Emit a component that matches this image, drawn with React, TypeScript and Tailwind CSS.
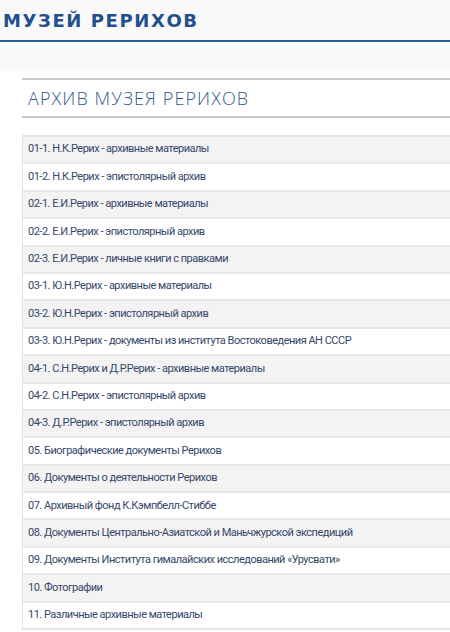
import React from "react";

const items = [
  "01-1. Н.К.Рерих - архивные материалы",
  "01-2. Н.К.Рерих - эпистолярный архив",
  "02-1. Е.И.Рерих - архивные материалы",
  "02-2. Е.И.Рерих - эпистолярный архив",
  "02-3. Е.И.Рерих - личные книги с правками",
  "03-1. Ю.Н.Рерих - архивные материалы",
  "03-2. Ю.Н.Рерих - эпистолярный архив",
  "03-3. Ю.Н.Рерих - документы из института Востоковедения АН СССР",
  "04-1. С.Н.Рерих и Д.Р.Рерих - архивные материалы",
  "04-2. С.Н.Рерих - эпистолярный архив",
  "04-3. Д.Р.Рерих - эпистолярный архив",
  "05. Биографические документы Рерихов",
  "06. Документы о деятельности Рерихов",
  "07. Архивный фонд К.Кэмпбелл-Стиббе",
  "08. Документы Центрально-Азиатской и Маньчжурской экспедиций",
  "09. Документы Института гималайских исследований «Урусвати»",
  "10. Фотографии",
  "11. Различные архивные материалы",
];

export default function App() {
  return (
    <div className="w-[450px] h-[632px] overflow-hidden bg-white">
      {/* site header */}
      <header className="bg-[#f9f9f9] h-[71px]">
        <div className="h-[42px] border-b-2 border-[#2c5b94] flex items-center pl-[3px] pt-[1px]">
          <h1 className="text-[#1f4f8d] font-bold text-[18px] tracking-[1.6px] font-['DejaVu_Sans',sans-serif] leading-none">
            МУЗЕЙ РЕРИХОВ
          </h1>
        </div>
      </header>

      <main className="pl-[22px] pt-[7px]">
        <div className="border-t-2 border-b-2 border-[#c9c9c9] h-[40px] flex items-center pl-[6px]">
          <h2 className="text-[#2f5a8f] text-[18px] tracking-[1.1px] font-['Open_Sans',sans-serif] font-light leading-none">
            АРХИВ МУЗЕЯ РЕРИХОВ
          </h2>
        </div>

        <ul className="mt-[17px] border-l border-t-2 border-[#e4e4e4]">
          {items.map((t, i) => (
            <li
              key={i}
              className={`h-[27.4px] flex items-center pl-[5px] border-b-2 border-[#e8e8e8] text-[11px] tracking-[-0.5px] text-[#34476a] font-['Roboto',sans-serif] ${
                i % 2 === 0 ? "bg-[#f3f3f3]" : "bg-white"
              }`}
            >
              {t}
            </li>
          ))}
        </ul>
      </main>
    </div>
  );
}
